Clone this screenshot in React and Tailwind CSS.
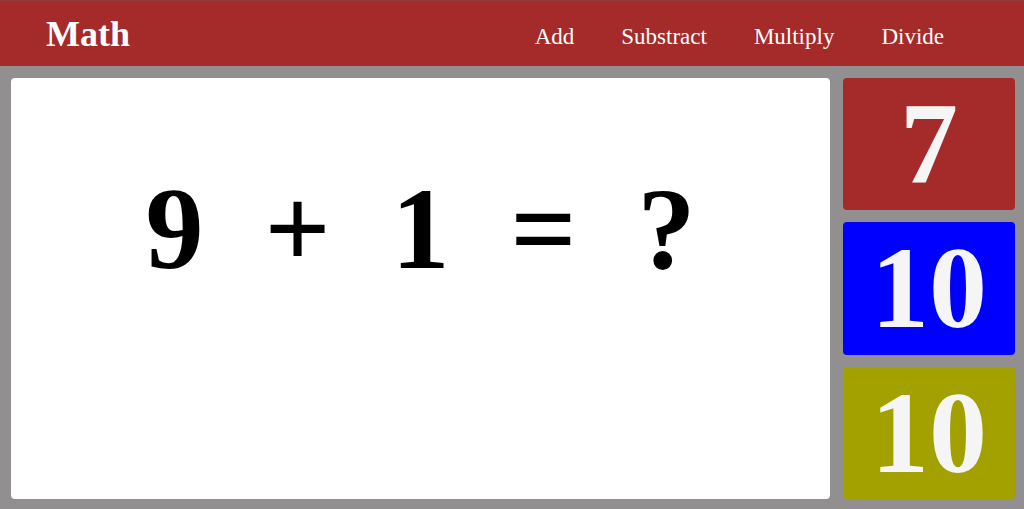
import React from "react";

const serif = { fontFamily: '"Liberation Serif", "Times New Roman", serif' };

function App() {
  const equation = ["9", "+", "1", "=", "?"];
  const answers = [
    { value: 7, color: "bg-[#a52a2a]" },
    { value: 10, color: "bg-[#0000ff]" },
    { value: 10, color: "bg-[#a3a100]" },
  ];

  return (
    <div className="w-[1024px] h-[509px] bg-[#918f8f] flex flex-col" style={serif}>
      {/* Header */}
      <header className="h-[66px] bg-[#a52a2a] border-t border-[#8e3c3c] flex items-center justify-between pl-[46px] pr-[80px] text-white">
        <h1 className="text-[36px] font-bold leading-none">Math</h1>
        <nav className="flex items-center gap-[47px] text-[23px] pt-[8px]">
          <a href="#">Add</a>
          <a href="#">Substract</a>
          <a href="#">Multiply</a>
          <a href="#">Divide</a>
        </nav>
      </header>

      {/* Main */}
      <main className="flex-1 flex gap-[13px] pl-[11px] pr-[9px] pt-[12px] pb-[10px]">
        <div className="flex-1 bg-white rounded-[4px] pt-[88px]">
          <div className="flex justify-center text-[116px] font-bold leading-[1.1] text-black">
            {equation.map((item, i) => (
              <span key={i} className="w-[123px] text-center">
                {item}
              </span>
            ))}
          </div>
        </div>

        <div className="w-[172px] flex flex-col gap-[12px]">
          {answers.map((a, i) => (
            <button
              key={i}
              className={`flex-1 ${a.color} rounded-[4px] flex items-center justify-center text-[116px] font-bold leading-none text-[#f5f5f5]`}
              style={serif}
            >
              {a.value}
            </button>
          ))}
        </div>
      </main>
    </div>
  );
}

export default App;
